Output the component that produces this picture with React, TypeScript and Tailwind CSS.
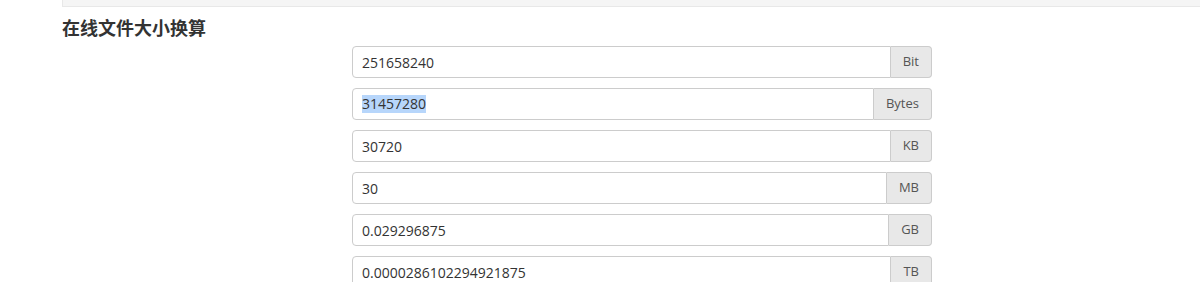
import React from "react";

const rows: { value: string; unit: string; selected?: boolean }[] = [
  { value: "251658240", unit: "Bit" },
  { value: "31457280", unit: "Bytes", selected: true },
  { value: "30720", unit: "KB" },
  { value: "30", unit: "MB" },
  { value: "0.029296875", unit: "GB" },
  { value: "0.0000286102294921875", unit: "TB" },
];

export default function App() {
  return (
    <div
      className="w-[1200px] h-[282px] overflow-hidden bg-white text-[#555]"
      style={{ fontFamily: '"Open Sans", "Noto Sans CJK SC", sans-serif' }}
    >
      <div className="pl-[62px]">
        <div className="h-[7px] bg-[#f5f5f5] border-b border-l border-[#e8e8e8]" />
        <h1
          className="mt-[8px] h-[24px] text-[18px] leading-[24px] font-bold text-[#333]"
          style={{ fontFamily: '"Noto Sans CJK SC", sans-serif' }}
        >
          在线文件大小换算
        </h1>
      </div>
      <div className="ml-[352px] w-[580px] mt-[7px] flex flex-col gap-[10px]">
        {rows.map((r) => (
          <div key={r.unit} className="flex h-[32px] text-[14px]">
            <div className="flex-1 flex items-center pl-[9px] border border-[#ccc] rounded-l-[4px] bg-white text-[#333]">
              {r.selected ? (
                <span className="bg-[#b7d6fb] leading-[18px]">{r.value}</span>
              ) : (
                <span>{r.value}</span>
              )}
            </div>
            <div className="flex items-center justify-center px-[12px] bg-[#e8e8e8] border border-l-0 border-[#ccc] rounded-r-[4px] text-[#555] text-[13px]">
              {r.unit}
            </div>
          </div>
        ))}
      </div>
    </div>
  );
}
